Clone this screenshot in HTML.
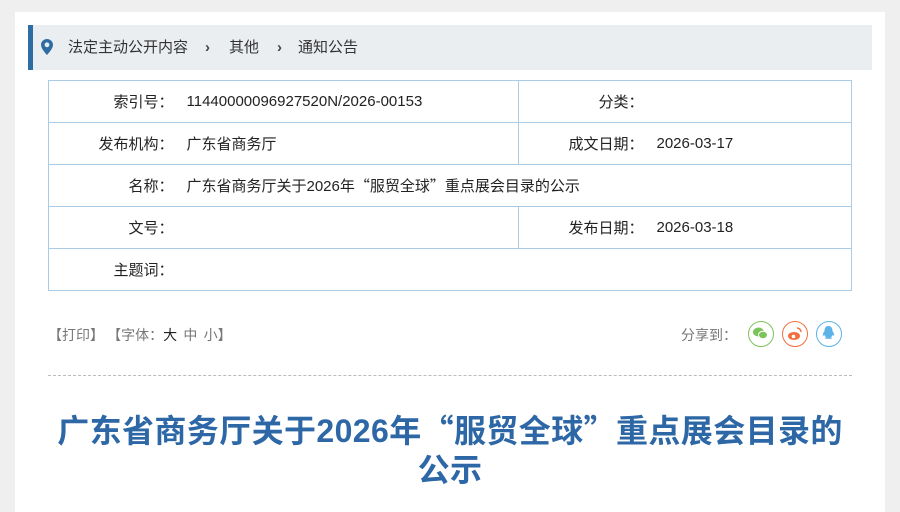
<!DOCTYPE html>
<html><head><meta charset="utf-8"><style>
*{margin:0;padding:0;box-sizing:border-box}
body{width:900px;height:496px;background:#efefef;overflow:hidden;font-family:"Liberation Sans","Noto Sans CJK SC",sans-serif;color:#333}
.panel{position:absolute;left:15px;top:12px;width:870px;height:500px;background:#fff}
.bc{position:absolute;left:28px;top:25px;width:844px;height:45px;background:#ebeef1;border-left:5px solid #2e6da4;font-size:15px;color:#333;line-height:45px}
.bc svg{position:absolute;left:8px;top:14px}
.bc span{position:absolute;top:0}
table{position:absolute;left:48px;top:80px;width:804px;border-collapse:collapse;font-size:15px;color:#222;border:1px solid #a9cbe6}
td{border-top:1px solid #a9cbe6;border-bottom:1px solid #a9cbe6;height:42px;vertical-align:middle}
.l{text-align:right;width:125px;font-family:"Noto Sans CJK SC",sans-serif;font-size:15px}
.v{padding-left:13px}
.mid{border-right:1px solid #a9cbe6}
.tools{position:absolute;top:325px;font-size:14px;color:#777;font-family:"Noto Sans CJK SC",sans-serif;line-height:20px}
.ic{position:absolute;top:321px;width:26px;height:26px;border-radius:50%;border:1.5px solid}
.dash{position:absolute;left:48px;top:375px;width:804px;border-top:1px dashed #bbb}
h1{position:absolute;left:0;top:411px;width:900px;text-align:center;color:#2d67a6;font-size:32px;letter-spacing:0.4px;line-height:37px;font-weight:bold;font-family:"Noto Sans CJK SC",sans-serif;white-space:nowrap}
h1 b{font-family:"Liberation Sans",sans-serif}
</style></head><body>
<div class="panel"></div>
<div class="bc">
<svg width="12" height="16" viewBox="0 0 12 16"><path d="M6 0C2.7 0 0 2.6 0 5.8 0 10 6 16 6 16s6-6 6-10.2C12 2.6 9.3 0 6 0zm0 8.2a2.4 2.4 0 110-4.8 2.4 2.4 0 010 4.8z" fill="#2e6da4"/></svg>
<span style="left:35px">法定主动公开内容</span>
<span style="left:172px;color:#444;font-weight:bold">&#8250;</span>
<span style="left:196px">其他</span>
<span style="left:244px;color:#444;font-weight:bold">&#8250;</span>
<span style="left:265px">通知公告</span>
</div>
<table>
<tr><td class="l">索引号：</td><td class="v mid" style="width:345px">11440000096927520N/2026-00153</td><td class="l" style="width:125px">分类：</td><td class="v"></td></tr>
<tr><td class="l">发布机构：</td><td class="v mid">广东省商务厅</td><td class="l">成文日期：</td><td class="v">2026-03-17</td></tr>
<tr><td class="l">名称：</td><td class="v" colspan="3">广东省商务厅关于2026年<span style="font-family:'Noto Sans CJK SC'">“服贸全球”</span>重点展会目录的公示</td></tr>
<tr><td class="l">文号：</td><td class="v mid"></td><td class="l">发布日期：</td><td class="v">2026-03-18</td></tr>
<tr><td class="l">主题词：</td><td class="v" colspan="3"></td></tr>
</table>
<div class="tools" style="left:48px">【打印】 【字体：<span style="color:#222">大</span>&nbsp; 中 &nbsp;小】</div>
<div class="tools" style="left:681px">分享到：</div>
<div class="ic" style="left:748px;border-color:#7dc35b"><svg width="23" height="23" viewBox="0 0 23 23"><ellipse cx="9.5" cy="10" rx="5.5" ry="4.5" fill="#7dc35b"/><ellipse cx="14" cy="13" rx="4.5" ry="3.8" fill="#7dc35b" stroke="#fff" stroke-width="1"/></svg></div>
<div class="ic" style="left:782px;border-color:#f2703f"><svg width="23" height="23" viewBox="0 0 23 23"><ellipse cx="11" cy="14" rx="6" ry="4" fill="#f2703f"/><circle cx="10.5" cy="14.5" r="1.8" fill="#fff"/><path d="M14 6a4 4 0 014 4" stroke="#f2703f" stroke-width="1.5" fill="none"/></svg></div>
<div class="ic" style="left:816px;border-color:#5bb3e8"><svg width="23" height="23" viewBox="0 0 23 23"><path d="M11.5 4c-3 0-4 2.5-4 5-1 1.5-2 3-1.5 5 .7-.5 1-1 1.3-1.3.3 1 1 2 2 2.6-1 .4-1.5 1-1 1.5h6.4c.5-.5 0-1.1-1-1.5 1-.6 1.7-1.6 2-2.6.3.3.6.8 1.3 1.3.5-2-.5-3.5-1.5-5 0-2.5-1-5-4-5z" fill="#5bb3e8"/></svg></div>
<div class="dash"></div>
<h1>广东省商务厅关于<b>2026</b>年“服贸全球”重点展会目录的<br>公示</h1>
</body></html>
